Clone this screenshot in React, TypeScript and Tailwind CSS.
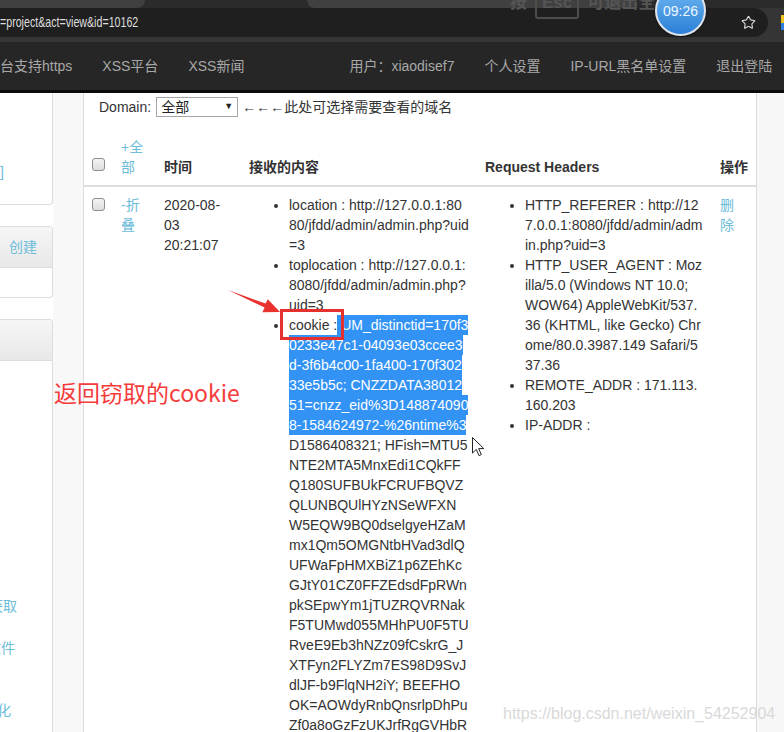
import { Star } from "lucide-react";

const link = "text-[#6cbcd8]";

const cookieHl = [
  "0233e47c1-04093e03ccee3",
  "d-3f6b4c00-1fa400-170f302",
  "33e5b5c; CNZZDATA38012",
  "51=cnzz_eid%3D148874090",
  "8-1584624972-%26ntime%3",
];
const cookieRest = [
  "D1586408321; HFish=MTU5",
  "NTE2MTA5MnxEdi1CQkFF",
  "Q180SUFBUkFCRUFBQVZ",
  "QLUNBQUlHYzNSeWFXN",
  "W5EQW9BQ0dselgyeHZaM",
  "mx1Qm5OMGNtbHVad3dlQ",
  "UFWaFpHMXBiZ1p6ZEhKc",
  "GJtY01CZ0FFZEdsdFpRWn",
  "pkSEpwYm1jTUZRQVRNak",
  "F5TUMwd055MHhPU0F5TU",
  "RveE9Eb3hNZz09fCskrG_J",
  "XTFyn2FLYZm7ES98D9SvJ",
  "dlJF-b9FlqNH2iY; BEEFHO",
  "OK=AOWdyRnbQnsrlpDhPu",
  "Zf0a8oGzFzUKJrfRgGVHbR",
  "n6Iw2uN0aVgqTT",
];

function Lines({ lines }: { lines: string[] }) {
  return (
    <>
      {lines.map((l, i) => (
        <div key={i} className="h-[20px] whitespace-nowrap">
          {l}
        </div>
      ))}
    </>
  );
}

function Checkbox() {
  return (
    <div className="w-[13px] h-[13px] rounded-[3px] border border-[#8d8d8d] bg-linear-to-b from-[#f4f4f4] to-[#dcdcdc]" />
  );
}

export default function App() {
  return (
    <div className="relative w-[784px] h-[732px] overflow-hidden bg-white font-['Liberation_Sans','Noto_Sans_CJK_SC',sans-serif] text-[14px] text-[#333]">
      {/* browser chrome */}
      <div className="h-[42px] bg-[#353535]">
        <div className="h-[8px] flex bg-[#2b2b2b]">
          <div className="w-[145px] bg-[#404040] rounded-br-[8px]" />
          <div className="ml-[162px] w-[330px] bg-[#404040] rounded-b-[8px]" />
        </div>
        <div className="h-[29px] w-[768px] rounded-r-full bg-[#1f1f1f] flex items-center justify-between pr-[12px]">
          <div className="origin-left scale-x-[0.71] text-[15px] text-[#dedede] whitespace-nowrap">
            =project&amp;act=view&amp;id=10162
          </div>
          <Star size={15} strokeWidth={1.8} className="text-[#d8d8d8]" />
        </div>
      </div>

      {/* navbar */}
      <div className="h-[51px] bg-[#262626] border-b-[3px] border-[#0b0b0b] flex items-center text-[#a8a8a8] whitespace-nowrap">
        <div className="flex ml-[-15px]">
          <span className="px-[15px]">台支持https</span>
          <span className="px-[15px]">XSS平台</span>
          <span className="px-[15px]">XSS新闻</span>
        </div>
        <div className="flex ml-[75px]">
          <span className="px-[15px]">用户：xiaodisef7</span>
          <span className="px-[15px]">个人设置</span>
          <span className="px-[15px]">IP-URL黑名单设置</span>
          <span className="px-[15px]">退出登陆</span>
        </div>
      </div>

      {/* body */}
      <div className="flex h-[639px]">
        {/* sidebar */}
        <aside className="w-[53px] flex flex-col shrink-0">
          <div className="h-[112px] border-r border-b border-[#ddd] rounded-br-[4px] bg-white pt-[69px] leading-[20px]">
            <span className={link}>]</span>
          </div>
          <div className="mt-[21px] h-[72px] border-y border-r border-[#ddd] rounded-r-[4px] bg-white overflow-hidden">
            <div className="h-[41px] border-b border-[#ddd] bg-linear-to-b from-[#f6f6f6] to-[#e8e8e8] flex items-center pl-[9px]">
              <span className={link}>创建</span>
            </div>
          </div>
          <div className="mt-[21px] flex-1 border-t border-r border-[#ddd] rounded-tr-[4px] bg-white overflow-hidden">
            <div className="h-[41px] border-b border-[#ddd] bg-linear-to-b from-[#f6f6f6] to-[#e8e8e8]" />
            <div className={`leading-[20px] whitespace-nowrap ${link}`}>
              <div className="mt-[235px] ml-[-11px]">获取</div>
              <div className="mt-[22px] ml-[-13px]">文件</div>
              <div className="mt-[42px] ml-[-17px]">优化</div>
            </div>
          </div>
        </aside>

        {/* gutter */}
        <div className="w-[30px] bg-[#f8f8f8] shrink-0" />

        {/* main */}
        <main className="w-[674px] shrink-0 border-x border-[#ddd] bg-white">
          <div className="h-[24px] pt-[4px] pl-[15px] flex items-center whitespace-nowrap">
            <span>Domain:</span>
            <div className="ml-[5px] w-[82px] h-[20px] border border-[#a6a6a6] flex items-center justify-between pl-[4px] pr-[4px] text-[#222]">
              <span>全部</span>
              <span className="text-[9px]">▼</span>
            </div>
            <span className="ml-[4px]">←←←此处可选择需要查看的域名</span>
          </div>

          <div className="mt-[12px] grid grid-cols-[29px_43px_85px_236px_235px_45px] leading-[20px]">
            {/* header */}
            <div className="px-[8px] py-[8px] border-b-2 border-[#ddd] flex items-end">
              <div className="mb-[6px]">
                <Checkbox />
              </div>
            </div>
            <div className={`px-[8px] py-[8px] border-b-2 border-[#ddd] flex items-end ${link}`}>
              <div>
                +全
                <br />部
              </div>
            </div>
            <div className="px-[8px] py-[8px] border-b-2 border-[#ddd] flex items-end font-bold">时间</div>
            <div className="px-[8px] py-[8px] border-b-2 border-[#ddd] flex items-end font-bold">接收的内容</div>
            <div className="px-[8px] py-[8px] border-b-2 border-[#ddd] flex items-end font-bold">Request Headers</div>
            <div className="px-[8px] py-[8px] border-b-2 border-[#ddd] flex items-end font-bold whitespace-nowrap">操作</div>

            {/* row */}
            <div className="px-[8px] pt-[11px]">
              <Checkbox />
            </div>
            <div className={`px-[8px] pt-[8px] ${link}`}>
              -折
              <br />叠
            </div>
            <div className="px-[8px] pt-[8px] whitespace-nowrap">
              2020-08-
              <br />
              03
              <br />
              20:21:07
            </div>
            <div className="px-[8px] pt-[8px]">
              <ul className="list-disc pl-[40px]">
                <li>
                  <Lines lines={["location : http://127.0.0.1:80", "80/jfdd/admin/admin.php?uid", "=3"]} />
                </li>
                <li>
                  <Lines lines={["toplocation : http://127.0.0.1:", "8080/jfdd/admin/admin.php?", "uid=3"]} />
                </li>
                <li>
                  <div className="h-[20px] whitespace-nowrap">
                    cookie :<span className="inline-block bg-[#3393f5] text-white leading-[20px]">&nbsp;UM_distinctid=170f3</span>
                  </div>
                  {cookieHl.map((l, i) => (
                    <div key={i} className="h-[20px] whitespace-nowrap">
                      <span className="inline-block bg-[#3393f5] text-white leading-[20px]">{l}</span>
                    </div>
                  ))}
                  <Lines lines={cookieRest} />
                </li>
              </ul>
            </div>
            <div className="px-[8px] pt-[8px]">
              <ul className="list-disc pl-[40px]">
                <li>
                  <Lines lines={["HTTP_REFERER : http://12", "7.0.0.1:8080/jfdd/admin/adm", "in.php?uid=3"]} />
                </li>
                <li>
                  <Lines
                    lines={[
                      "HTTP_USER_AGENT : Moz",
                      "illa/5.0 (Windows NT 10.0;",
                      "WOW64) AppleWebKit/537.",
                      "36 (KHTML, like Gecko) Chr",
                      "ome/80.0.3987.149 Safari/5",
                      "37.36",
                    ]}
                  />
                </li>
                <li>
                  <Lines lines={["REMOTE_ADDR : 171.113.", "160.203"]} />
                </li>
                <li>
                  <Lines lines={["IP-ADDR :"]} />
                </li>
              </ul>
            </div>
            <div className={`px-[8px] pt-[8px] ${link}`}>
              删
              <br />除
            </div>
          </div>
        </main>

        <div className="flex-1 bg-[#f7f7f7]" />
      </div>

      {/* overlays: fullscreen hint & clock */}
      <div className="absolute left-[510px] top-[-13px] flex items-center gap-[8px] text-[17px] font-bold text-[#555] whitespace-nowrap">
        <span>按</span>
        <span className="border-2 border-[#4d4d4d] rounded-[3px] px-[5px] h-[32px] leading-[28px]">Esc</span>
        <span>可退出全屏</span>
      </div>
      <div className="absolute left-[655px] top-[-15px] w-[51px] h-[51px] rounded-full border-2 border-[#dfe4ea] bg-linear-to-b from-[#6fb8f2] to-[#2a7fd6] flex items-center justify-center shadow-[0_1px_3px_rgba(0,0,0,0.4)]">
        <span className="text-[14px] text-[#eef6ff] leading-none">09:26</span>
      </div>
      <div className="absolute left-[781px] top-[15px] w-[6px] h-[15px] flex flex-col">
        <div className="h-[8px] bg-[#f2c21b]" />
        <div className="h-[7px] bg-[#2f7de0]" />
      </div>

      {/* annotations */}
      <svg className="absolute left-0 top-0 pointer-events-none" width="784" height="732" viewBox="0 0 784 732">
        <polygon points="228,290 265.6,303.6 267.8,299.3 280,312 262.4,312.2 264.6,307.6" fill="#e8332f" />
      </svg>
      <div className="absolute left-[280px] top-[309px] w-[64px] h-[31px] border-[3px] border-[#e53030]" />
      <div className="absolute left-[54px] top-[376px] text-[23px] leading-[32px] text-[#f53c3c] font-['Noto_Sans_CJK_SC',sans-serif] whitespace-nowrap">
        返回窃取的cookie
      </div>

      {/* mouse cursor */}
      <svg className="absolute left-[472px] top-[437px]" width="13" height="20" viewBox="0 0 13 20">
        <path d="M0.5 0.5 L0.5 16 L4.3 12.4 L7 18.6 L9.3 17.6 L6.7 11.6 L11.8 11.6 Z" fill="#fff" stroke="#222" strokeWidth="1" strokeLinejoin="round" />
      </svg>

      {/* watermark */}
      <div className="absolute left-[503px] top-[704px] text-[16px] leading-[20px] text-[#d9d9d9] whitespace-nowrap">
        https://blog.csdn.net/weixin_54252904
      </div>
    </div>
  );
}
